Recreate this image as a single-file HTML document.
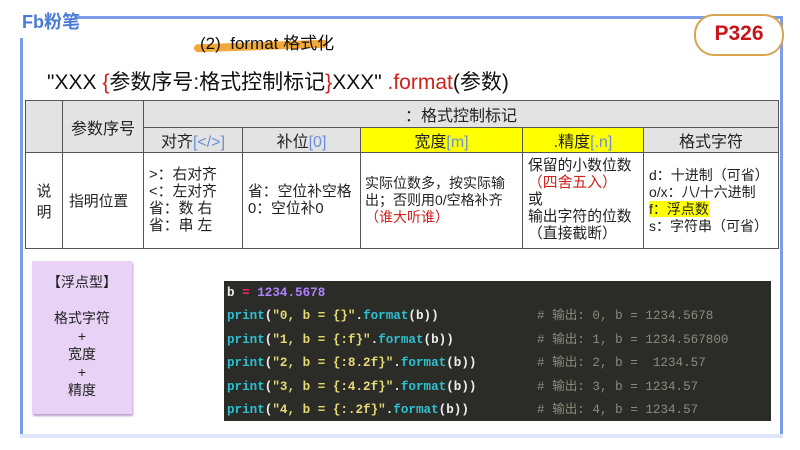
<!DOCTYPE html>
<html><head><meta charset="utf-8"><style>
body{margin:0;width:800px;height:450px;background:#fff;position:relative;overflow:hidden;font-family:"Liberation Sans","Noto Sans CJK SC",sans-serif;}
.a{position:absolute}
table{border-collapse:collapse;position:absolute;left:25px;top:100px;width:754px;font-size:14.8px;color:#222}
td{border:1px solid #555;text-align:center;padding:0;white-space:nowrap}
.h{background:#e3e3e3;font-size:16px}
.y{background:#ffff00}
.b{color:#6b8fd8}
.r{color:#d0211c}
.code{position:absolute;left:224px;top:281px;width:547px;height:140px;background:#2b2b27;font-family:"Liberation Mono","Noto Sans CJK SC",monospace;font-size:12.6px;color:#eee;font-weight:bold}
.code div{position:absolute;left:3px;white-space:pre;line-height:16px}
.c{color:#2fc0d0}.s{color:#e6db74}.p{color:#ae81ff}.k{color:#f92672}.g{color:#8b8b7d;font-weight:normal}
</style></head><body>
<div class="a" style="left:20px;top:38px;width:3px;height:399px;background:#7c9be8"></div>
<div class="a" style="left:75px;top:16px;width:707px;height:3px;background:#7c9be8"></div>
<div class="a" style="left:780px;top:16px;width:3px;height:421px;background:#7c9be8"></div>
<div class="a" style="left:20px;top:434px;width:763px;height:4px;background:#dfe6fb"></div>
<div class="a" style="left:22px;top:8px;font-size:18px;font-weight:bold;color:#4a7bd6">Fb粉笔</div>
<div class="a" style="left:194px;top:42px;width:134px;height:8px;background:#f2a83a;border-radius:4px;transform:rotate(-2deg)"></div>
<div class="a" style="left:200px;top:29px;font-size:17px;color:#111;white-space:nowrap">(2)&nbsp; format 格式化</div>
<div class="a" style="left:694px;top:14px;width:86px;height:38px;border:2px solid #d9a450;border-radius:20px;background:#fff;text-align:center;line-height:36px;font-size:21px;font-weight:bold;color:#c8141a">P326</div>
<div class="a" style="left:47px;top:66px;font-size:21px;color:#111">"XXX <span class="r">{</span>参数序号:格式控制标记<span class="r">}</span>XXX" <span class="r">.format</span>(参数)</div>
<table>
<tr style="height:27px"><td class="h" rowspan="2" style="width:36px"></td><td class="h" rowspan="2" style="width:80px">参数序号</td><td class="h" colspan="5">：格式控制标记</td></tr>
<tr style="height:24px"><td class="h" style="width:98px">对齐<span class="b">[&lt;/&gt;]</span></td><td class="h" style="width:117px">补位<span class="b">[0]</span></td><td class="h y" style="width:161px">宽度<span class="b">[m]</span></td><td class="h y" style="width:120px">.精度<span class="b">[.n]</span></td><td class="h">格式字符</td></tr>
<tr style="height:96px"><td>说<br>明</td><td style="text-align:left;padding-left:6px">指明位置</td>
<td style="text-align:left;padding-left:5px;line-height:17px">&gt;：右对齐<br>&lt;：左对齐<br>省：数 右<br>省：串 左</td>
<td style="text-align:left;padding-left:5px;line-height:17px">省：空位补空格<br>0：空位补0</td>
<td style="text-align:left;padding-left:4px;line-height:17px;font-size:14px">实际位数多，按实际输<br>出；否则用0/空格补齐<br><span class="r">（谁大听谁）</span></td>
<td style="text-align:left;padding-left:5px;line-height:17px">保留的小数位数<br><span class="r">（四舍五入）</span><br>或<br>输出字符的位数<br>（直接截断）</td>
<td style="text-align:left;padding-left:5px;line-height:17px;font-size:14px">d：十进制（可省）<br>o/x：八/十六进制<br><span style="background:#ffff00">f：浮点数</span><br>s：字符串（可省）</td></tr>
</table>
<div class="a" style="left:32px;top:261px;width:100px;height:153px;background:#e8d2f5;box-shadow:1px 2px 2px #b9a0cc;text-align:center;font-size:14px;color:#222;line-height:18px">
<div style="margin-top:12px">【浮点型】</div><div style="margin-top:18px">格式字符<br>+<br>宽度<br>+<br>精度</div></div>
<div class="code">
<div style="top:4px">b <span class="k">=</span> <span class="p">1234.5678</span></div>
<div style="top:27px"><span class="c">print</span>(<span class="s">"0, b = {}"</span>.<span class="c">format</span>(b))</div>
<div style="top:51px"><span class="c">print</span>(<span class="s">"1, b = {:f}"</span>.<span class="c">format</span>(b))</div>
<div style="top:74px"><span class="c">print</span>(<span class="s">"2, b = {:8.2f}"</span>.<span class="c">format</span>(b))</div>
<div style="top:98px"><span class="c">print</span>(<span class="s">"3, b = {:4.2f}"</span>.<span class="c">format</span>(b))</div>
<div style="top:121px"><span class="c">print</span>(<span class="s">"4, b = {:.2f}"</span>.<span class="c">format</span>(b))</div>
<div class="g" style="left:313px;top:27px"># 输出: 0, b = 1234.5678</div>
<div class="g" style="left:313px;top:51px"># 输出: 1, b = 1234.567800</div>
<div class="g" style="left:313px;top:74px"># 输出: 2, b =  1234.57</div>
<div class="g" style="left:313px;top:98px"># 输出: 3, b = 1234.57</div>
<div class="g" style="left:313px;top:121px"># 输出: 4, b = 1234.57</div>
</div>
</body></html>
